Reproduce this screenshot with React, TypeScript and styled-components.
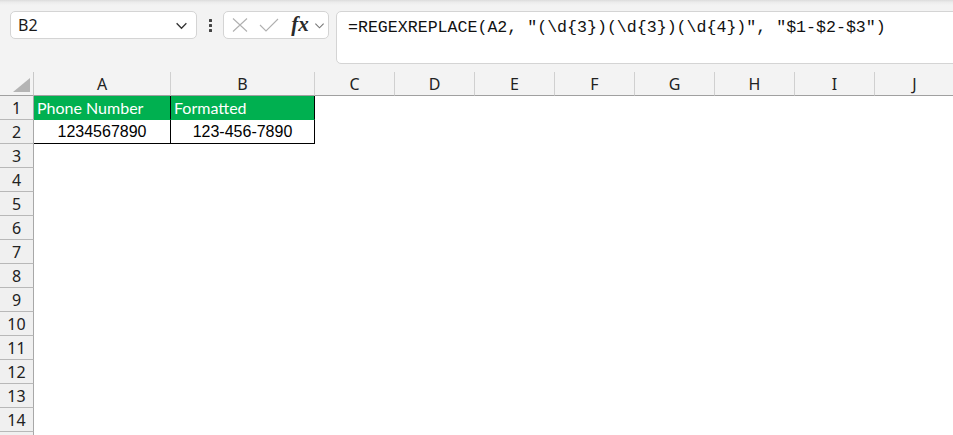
import React from "react";
import styled, { createGlobalStyle } from "styled-components";

const Global = createGlobalStyle`
  html, body { margin: 0; padding: 0; background: #ffffff; }
  #root { width: 953px; height: 435px; overflow: hidden; }
`;

const Page = styled.div`
  width: 953px;
  height: 435px;
  overflow: hidden;
  background: #ffffff;
  display: flex;
  flex-direction: column;
`;

const Toolbar = styled.div`
  height: 72px;
  flex: none;
  background: linear-gradient(#dcdcdc 0px, #ebebeb 2px, #f3f3f3 5px, #f3f3f3 100%);
  display: flex;
  align-items: flex-start;
  padding: 11px 0 0 10px;
  box-sizing: border-box;
`;

const NameBox = styled.div`
  width: 187px;
  height: 28px;
  box-sizing: border-box;
  background: #fff;
  border: 1px solid #d4d4d4;
  border-radius: 5px;
  display: flex;
  align-items: center;
  justify-content: space-between;
  padding: 0 8px 0 7px;
  font-family: "Noto Sans", sans-serif;
  font-size: 16px;
  color: #1a1a1a;
`;

const Dots = styled.div`
  width: 26px;
  height: 28px;
  display: flex;
  flex-direction: column;
  align-items: center;
  justify-content: center;
  gap: 2px;
`;

const Dot = styled.span`
  width: 3px;
  height: 3px;
  background: #444;
  border-radius: 0.5px;
`;

const FuncBox = styled.div`
  width: 106px;
  height: 28px;
  box-sizing: border-box;
  background: #fff;
  border: 1px solid #d4d4d4;
  border-radius: 5px;
  display: flex;
  align-items: center;
  padding: 0 0 0 6px;
`;

const IconSlot = styled.span<{ $w: number }>`
  width: ${(p) => p.$w}px;
  display: flex;
  align-items: center;
  justify-content: center;
`;

const Fx = styled.span`
  font-family: "Liberation Serif", "DejaVu Serif", serif;
  font-style: italic;
  font-weight: 600;
  font-size: 21px;
  color: #2a2a2a;
  width: 22px;
  text-align: center;
  line-height: 1;
  margin: 0 3px 2px 0;
`;

const FormulaBar = styled.div`
  flex: 1;
  height: 53px;
  margin-left: 7px;
  margin-right: -6px;
  box-sizing: border-box;
  background: #fff;
  border: 1px solid #d4d4d4;
  border-radius: 5px;
  padding: 6px 0 0 11px;
  font-family: "Liberation Mono", "DejaVu Sans Mono", monospace;
  font-size: 16.6px;
  color: #111;
  white-space: pre;
`;

const Grid = styled.div`
  display: grid;
  grid-template-columns: 34px 137px 144px repeat(8, 80px);
  grid-auto-rows: 24px;
`;

const Corner = styled.div`
  background: #f3f3f3;
  border-right: 1px solid #c8c8c8;
  border-bottom: 1px solid #a0a0a0;
  box-sizing: border-box;
  display: flex;
  align-items: flex-end;
  justify-content: flex-end;
  padding: 0 3px 3px 0;
`;

const ColHead = styled.div`
  background: #f3f3f3;
  border-right: 1px solid #d0d0d0;
  border-bottom: 1px solid #a0a0a0;
  box-sizing: border-box;
  display: flex;
  align-items: center;
  justify-content: center;
  font-family: "Noto Sans", sans-serif;
  font-size: 16px;
  color: #222;
  padding-top: 1px;
`;

const RowHead = styled.div`
  background: #f0f0f0;
  border-right: 1px solid #a8a8a8;
  border-bottom: 1px solid #b8b8b8;
  box-sizing: border-box;
  display: flex;
  align-items: center;
  justify-content: center;
  font-family: "Noto Sans", sans-serif;
  font-size: 16px;
  color: #222;
`;

const Cell = styled.div<{ $fill?: boolean; $br?: boolean; $bb?: boolean; $align?: string }>`
  box-sizing: border-box;
  background: ${(p) => (p.$fill ? "#00b050" : "#fff")};
  color: ${(p) => (p.$fill ? "#fff" : "#000")};
  border-right: 1px solid ${(p) => (p.$br ? "#000" : "transparent")};
  border-bottom: 1px solid ${(p) => (p.$bb ? "#000" : "transparent")};
  display: flex;
  align-items: center;
  justify-content: ${(p) => p.$align || "flex-start"};
  padding: 0 3px;
  font-family: ${(p) => (p.$fill ? `"Lato", sans-serif` : `"Liberation Sans", Arial, sans-serif`)};
  font-size: 16px;
  white-space: nowrap;
  overflow: hidden;
`;

const cols = ["A", "B", "C", "D", "E", "F", "G", "H", "I", "J"];

const Chevron = ({ size = 12, color = "#333" }: { size?: number; color?: string }) => (
  <svg width={size} height={size} viewBox="0 0 12 12">
    <path d="M1.5 4 L6 8.5 L10.5 4" fill="none" stroke={color} strokeWidth="1.2" />
  </svg>
);

export default function App() {
  const rows: React.ReactNode[] = [];
  for (let r = 3; r <= 15; r++) {
    rows.push(<RowHead key={`rh${r}`}>{r}</RowHead>);
    for (let c = 0; c < 10; c++) rows.push(<Cell key={`c${r}-${c}`} />);
  }
  return (
    <Page>
      <Global />
      <Toolbar>
        <NameBox>
          <span>B2</span>
          <Chevron size={13} color="#333" />
        </NameBox>
        <Dots>
          <Dot />
          <Dot />
          <Dot />
        </Dots>
        <FuncBox>
          <IconSlot $w={19}>
            <svg width="16" height="14" viewBox="0 0 16 14">
              <path d="M1 0.5 L15 13.5 M15 0.5 L1 13.5" stroke="#b0b0b0" strokeWidth="1.1" fill="none" />
            </svg>
          </IconSlot>
          <IconSlot $w={40}>
            <svg width="20" height="14" viewBox="0 0 20 14">
              <path d="M1 7 L7 13 L19 1" stroke="#b0b0b0" strokeWidth="1.1" fill="none" />
            </svg>
          </IconSlot>
          <Fx>fx</Fx>
          <Chevron size={11} color="#777" />
        </FuncBox>
        <FormulaBar>{'=REGEXREPLACE(A2, "(\\d{3})(\\d{3})(\\d{4})", "$1-$2-$3")'}</FormulaBar>
      </Toolbar>
      <Grid>
        <Corner>
          <svg width="17" height="14" viewBox="0 0 17 14">
            <path d="M17 0 L17 14 L0 14 Z" fill="#b4b4b4" />
          </svg>
        </Corner>
        {cols.map((c) => (
          <ColHead key={c}>{c}</ColHead>
        ))}
        <RowHead>1</RowHead>
        <Cell $fill $br>Phone Number</Cell>
        <Cell $fill $br>Formatted</Cell>
        {cols.slice(2).map((c) => (
          <Cell key={`1${c}`} />
        ))}
        <RowHead>2</RowHead>
        <Cell $br $bb $align="center">1234567890</Cell>
        <Cell $br $bb $align="center">123-456-7890</Cell>
        {cols.slice(2).map((c) => (
          <Cell key={`2${c}`} />
        ))}
        {rows}
      </Grid>
    </Page>
  );
}
